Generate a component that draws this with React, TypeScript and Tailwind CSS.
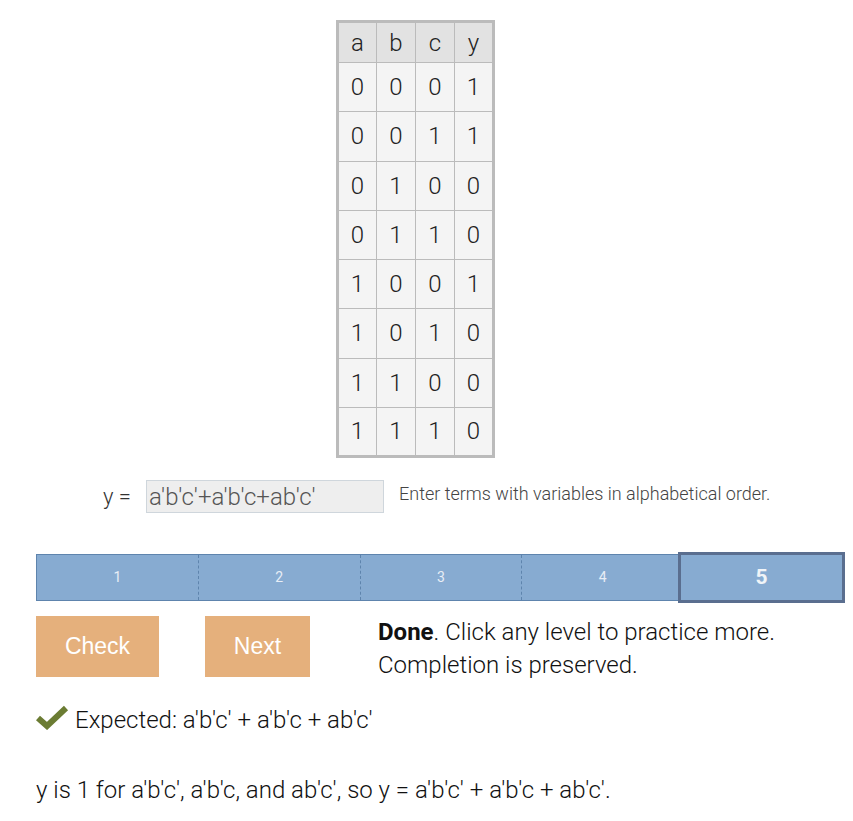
import React from "react";

const rows = [
  [0, 0, 0, 1],
  [0, 0, 1, 1],
  [0, 1, 0, 0],
  [0, 1, 1, 0],
  [1, 0, 0, 1],
  [1, 0, 1, 0],
  [1, 1, 0, 0],
  [1, 1, 1, 0],
];

export default function App() {
  return (
    <div
      className="w-[853px] min-h-[821px] bg-white pl-[36px] pr-[10px] pt-[20px] text-[#222] font-light"
      style={{ fontFamily: "Roboto, 'Liberation Sans', sans-serif" }}
    >
      <div className="ml-[300px]">
        <table className="border-collapse border-[3px] border-[#bbbbbb] text-[24px]">
          <thead>
            <tr>
              {["a", "b", "c", "y"].map((h) => (
                <th
                  key={h}
                  className="w-[39px] h-[41px] p-0 border border-[#bbbbbb] bg-[#e2e2e2] font-light text-center leading-none"
                >
                  {h}
                </th>
              ))}
            </tr>
          </thead>
          <tbody>
            {rows.map((r, i) => (
              <tr key={i}>
                {r.map((v, j) => (
                  <td
                    key={j}
                    className="w-[39px] h-[49.25px] p-0 border border-[#bbbbbb] bg-[#f4f4f4] text-center leading-none"
                  >
                    {v}
                  </td>
                ))}
              </tr>
            ))}
          </tbody>
        </table>
      </div>

      <div className="mt-[22px] flex items-center h-[33px]">
        <span className="ml-[67px] text-[22px] text-[#333]">y =</span>
        <div className="ml-[15px] w-[238px] h-[33px] border border-[#cfd6dc] bg-[#eeeeee] pl-[2px] flex items-center text-[24px] text-[#555]">
          a'b'c'+a'b'c+ab'c'
        </div>
        <span className="ml-[15px] -mt-[6px] text-[18px] text-[#444]">
          Enter terms with variables in alphabetical order.
        </span>
      </div>

      <div className="mt-[41px] flex h-[47px] w-[807px] border border-[#5e84ad] bg-[#87abd1]">
        {[1, 2, 3, 4].map((n) => (
          <div
            key={n}
            className={`flex-1 flex items-center justify-center text-[14px] text-[#e8eef6] font-normal ${
              n > 1 ? "border-l border-dashed border-[#5e84ad]" : ""
            }`}
          >
            {n}
          </div>
        ))}
        <div className="flex-1 flex items-center justify-center text-[21px] text-[#f0f4f8] font-bold outline-[3px] outline-solid outline-[#5a6e8f] -ml-[2px]">
          5
        </div>
      </div>

      <div className="mt-[15px] flex items-start">
        <button
          className="w-[123px] h-[61px] bg-[#e5b07c] text-white text-[23px]"
          style={{ fontFamily: "'Liberation Sans', Arial, sans-serif" }}
        >
          Check
        </button>
        <button
          className="ml-[46px] w-[105px] h-[61px] bg-[#e5b07c] text-white text-[23px]"
          style={{ fontFamily: "'Liberation Sans', Arial, sans-serif" }}
        >
          Next
        </button>
        <div className="ml-[68px] text-[24px] leading-[33px] text-[#111]">
          <div>
            <span className="font-bold">Done</span>. Click any level to practice more.
          </div>
          <div>Completion is preserved.</div>
        </div>
      </div>

      <div className="mt-[21px] flex items-center h-[33px]">
        <svg width="33" height="26" viewBox="0 0 33 26" className="-mt-[6px]">
          <path
            d="M2 14 L11 22 L30 4"
            fill="none"
            stroke="#6b7c33"
            strokeWidth="6"
            strokeLinejoin="miter"
          />
        </svg>
        <span className="ml-[6px] text-[24px] text-[#111]">
          Expected: a'b'c' + a'b'c + ab'c'
        </span>
      </div>

      <div className="mt-[38px] text-[24px] leading-[33px] text-[#111]">
        y is 1 for a'b'c', a'b'c, and ab'c', so y = a'b'c' + a'b'c + ab'c'.
      </div>
    </div>
  );
}
